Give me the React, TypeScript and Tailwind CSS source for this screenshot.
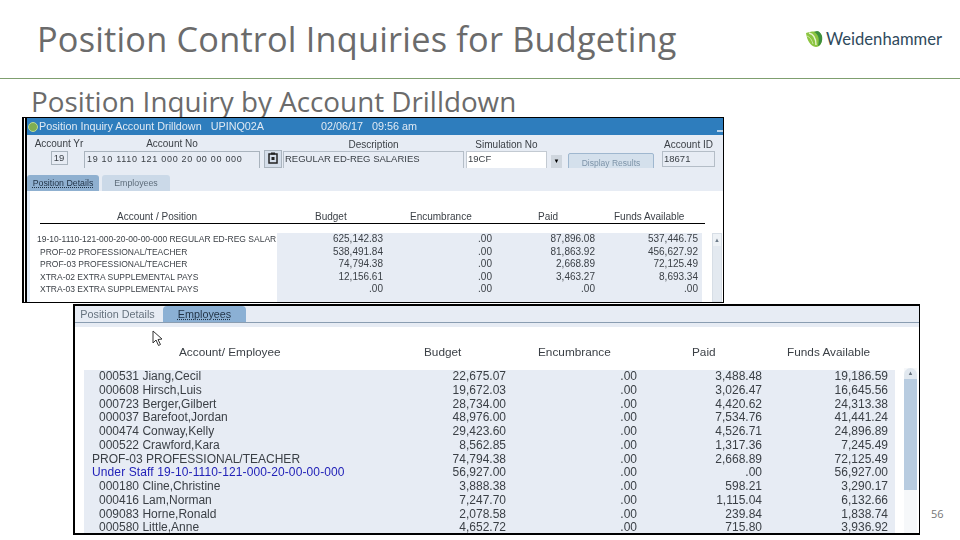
import React from 'react';

const positionRows = [
  ['19-10-1110-121-000-20-00-00-000 REGULAR ED-REG SALAR', '625,142.83', '.00', '87,896.08', '537,446.75'],
  ['PROF-02 PROFESSIONAL/TEACHER', '538,491.84', '.00', '81,863.92', '456,627.92'],
  ['PROF-03 PROFESSIONAL/TEACHER', '74,794.38', '.00', '2,668.89', '72,125.49'],
  ['XTRA-02 EXTRA SUPPLEMENTAL PAYS', '12,156.61', '.00', '3,463.27', '8,693.34'],
  ['XTRA-03 EXTRA SUPPLEMENTAL PAYS', '.00', '.00', '.00', '.00'],
];

const employeeRows = [
  ['000531 Jiang,Cecil', '22,675.07', '.00', '3,488.48', '19,186.59'],
  ['000608 Hirsch,Luis', '19,672.03', '.00', '3,026.47', '16,645.56'],
  ['000723 Berger,Gilbert', '28,734.00', '.00', '4,420.62', '24,313.38'],
  ['000037 Barefoot,Jordan', '48,976.00', '.00', '7,534.76', '41,441.24'],
  ['000474 Conway,Kelly', '29,423.60', '.00', '4,526.71', '24,896.89'],
  ['000522 Crawford,Kara', '8,562.85', '.00', '1,317.36', '7,245.49'],
  ['PROF-03 PROFESSIONAL/TEACHER', '74,794.38', '.00', '2,668.89', '72,125.49'],
  ['Under Staff 19-10-1110-121-000-20-00-00-000', '56,927.00', '.00', '.00', '56,927.00'],
  ['000180 Cline,Christine', '3,888.38', '.00', '598.21', '3,290.17'],
  ['000416 Lam,Norman', '7,247.70', '.00', '1,115.04', '6,132.66'],
  ['009083 Horne,Ronald', '2,078.58', '.00', '239.84', '1,838.74'],
  ['000580 Little,Anne', '4,652.72', '.00', '715.80', '3,936.92'],
];

const Logo = () => (
  <div className="flex items-center gap-[3px]">
    <svg width="18" height="17" viewBox="0 0 18 17">
      <path d="M1 2 C2 9 5 15 11 16 C15 16 17 12 17 7 C17 4 15 1 13 1 C9 0 4 1 1 2 Z" fill="#8cc540" />
      <path d="M9 1 C13 3 15 7 13 15 C16 14 18 10 17 5 C16 2 14 0 12 0 Z" fill="#3e8f3e" />
      <path d="M4 2 C8 3 11 7 11 14" stroke="#e8f3d0" strokeWidth="1.4" fill="none" />
      <path d="M2 5 C5 6 7 9 8 13" stroke="#c7e39a" strokeWidth="1" fill="none" />
    </svg>
    <span className="font-['Lato',sans-serif] text-[16.6px] leading-none text-[#2f4a5c]">Weidenhammer</span>
  </div>
);

const WindowOne = () => (
  <div className="absolute left-[22px] top-[117px] flex h-[186px] w-[702px] flex-col overflow-hidden border border-double border-black border-l-[5px] bg-white font-['Liberation_Sans',sans-serif] text-[#3a3f45] blur-[0.3px]">
    <div className="flex h-[17px] shrink-0 items-center justify-between bg-[#2e7dbd] pl-[1px] text-[10.8px] text-[#dfe9f3]">
      <div className="flex items-center gap-[1px]">
        <span className="h-[10px] w-[10px] rounded-full border border-[#b9d99a] bg-[#7fae52]" />
        <span className="w-[224px] whitespace-nowrap">Position Inquiry Account Drilldown&nbsp;&nbsp;&nbsp;UPINQ02A</span>
        <span className="ml-[57px] whitespace-nowrap">02/06/17&nbsp;&nbsp;&nbsp;09:56 am</span>
      </div>
      <span className="mt-[4px] h-[6px] w-[6px] border-b-2 border-[#b9d3ea]" />
    </div>
    <div className="flex h-[33px] shrink-0 items-start overflow-hidden bg-[#e7ecf4] text-[9.5px]">
      <div className="ml-[7px] flex w-[50px] flex-col items-center pt-[3px]">
        <span className="whitespace-nowrap text-[10px] leading-[11px]">Account Yr</span>
        <span className="mt-[2px] flex h-[14px] w-[17px] items-center justify-center border border-[#a9b3bd]">19</span>
      </div>
      <div className="flex w-[176px] flex-col items-center pt-[3px]">
        <span className="text-[10px] leading-[11px]">Account No</span>
        <span className="mt-[2px] h-[20px] w-[176px] border border-[#a9b3bd] pl-[2px] text-[9px] leading-[14px] tracking-[0.7px] whitespace-nowrap">19 10 1110 121 000 20 00 00 000</span>
      </div>
      <span className="ml-[4px] mt-[15px] flex h-[18px] w-[18px] items-start justify-center border border-[#a9b3bd] bg-[#d5deea] pt-[1px]">
        <svg width="10" height="12" viewBox="0 0 10 12"><rect x="1" y="2" width="8" height="9" fill="none" stroke="#222" strokeWidth="1.5" /><rect x="3" y="0.5" width="4" height="2" fill="#222" /><rect x="3.5" y="5" width="3" height="3" fill="#222" /></svg>
      </span>
      <div className="ml-[1px] flex w-[181px] flex-col items-center pt-[4px]">
        <span className="text-[10px] leading-[11px]">Description</span>
        <span className="mt-[1px] h-[20px] w-[181px] border border-[#b4bdc7] pl-[1px] leading-[14px]">REGULAR ED-REG SALARIES</span>
      </div>
      <div className="ml-[2px] flex w-[81px] flex-col items-center pt-[4px]">
        <span className="whitespace-nowrap text-[10px] leading-[11px]">Simulation No</span>
        <span className="mt-[1px] h-[20px] w-[81px] border border-[#c3cad2] bg-white pl-[1px] leading-[14px]">19CF</span>
      </div>
      <span className="ml-[4px] mt-[20px] flex h-[13px] w-[11px] items-center justify-center bg-[#cfd6de] text-[6px] text-black">▼</span>
      <span className="ml-[6px] mt-[18px] h-[20px] w-[86px] rounded-[2px] border border-[#9fb7cf] bg-[#d4e0ec] pt-[3px] text-center text-[8.5px] text-[#7d93a8]">Display Results</span>
      <div className="ml-[8px] flex w-[53px] flex-col items-center pt-[4px]">
        <span className="whitespace-nowrap text-[10px] leading-[11px]">Account ID</span>
        <span className="mt-[1px] h-[16px] w-[53px] border border-[#b4bdc7] pl-[1px] leading-[14px]">18671</span>
      </div>
    </div>
    <div className="flex h-[23px] shrink-0 items-end gap-[3px] bg-[#e7ecf4] text-[8.8px]">
      <span className="h-[16px] w-[72px] rounded-t-[3px] bg-[#8fb0d0] text-center leading-[17px] text-[#1f3144] underline decoration-dotted">Position Details</span>
      <span className="h-[16px] w-[68px] rounded-t-[3px] bg-[#cbd9e8] text-center leading-[17px] text-[#5d6c7a]">Employees</span>
    </div>
    <div className="flex min-h-0 flex-1 border-l-[3px] border-l-[#e3eefb] pl-[10px]">
      <div className="flex w-[665px] shrink-0 flex-col">
        <div className="mt-[20px] grid h-[13px] grid-cols-[275px_95px_128px_76px_91px] border-b border-black text-[10px] leading-[12px]">
          <span className="whitespace-nowrap pl-[77px]">Account / Position</span>
          <span>Budget</span>
          <span>Encumbrance</span>
          <span>Paid</span>
          <span className="whitespace-nowrap">Funds Available</span>
        </div>
        <div className="mt-[9px] -ml-[3px] flex flex-1">
          <div className="w-[240px] shrink-0 text-[8.5px]">
            {positionRows.map((row, i) => (
              <div key={row[0]} className={`h-[12.6px] whitespace-nowrap leading-[12.6px] ${i === 0 ? '' : 'pl-[3px]'}`}>{row[0]}</div>
            ))}
          </div>
          <div className="w-[425px] shrink-0 bg-[#e7ecf4] pr-[4px]">
            {positionRows.map((row) => (
              <div key={row[0]} className="grid h-[12.6px] grid-cols-[106px_109px_103px_103px] text-right text-[10px] leading-[12.6px]">
                <span>{row[1]}</span>
                <span>{row[2]}</span>
                <span>{row[3]}</span>
                <span>{row[4]}</span>
              </div>
            ))}
          </div>
        </div>
      </div>
      <div className="ml-[7px] mt-[42px] flex w-[10px] flex-col border border-[#d7dee6] bg-[#eef2f6]">
        <span className="flex h-[12px] items-center justify-center rounded-t-full text-[6px] text-[#6d7b89]">▲</span>
        <span className="flex-1 bg-[#e3e9f0]" />
      </div>
    </div>
  </div>
);

const WindowTwo = () => (
  <div className="absolute left-[73px] top-[304px] flex h-[231px] w-[847px] flex-col overflow-hidden border-2 border-r border-black bg-white font-['Liberation_Sans',sans-serif] text-[#3a3f45] blur-[0.3px]">
    <div className="flex h-[17px] shrink-0 items-end gap-[3px] border-b border-[#8a9db1] bg-[#e7ecf4] text-[10.8px]">
      <span className="h-[16px] w-[85px] text-center leading-[16px] text-[#66727e]">Position Details</span>
      <span className="h-[16px] w-[83px] rounded-t-[4px] bg-[#8bb0d4] text-center leading-[16px] text-[#1f3144] underline decoration-dotted">Employees</span>
    </div>
    <div className="h-[4px] shrink-0 bg-[#e7ecf4]" />
    <div className="flex min-h-0 flex-1 text-[12px]">
      <div className="flex w-[820px] shrink-0 flex-col">
        <div className="mt-[19px] grid h-[12px] grid-cols-[349px_114px_154px_95px_108px] text-[11.8px] leading-[12px]">
          <span className="whitespace-nowrap pl-[104px]">Account/ Employee</span>
          <span>Budget</span>
          <span>Encumbrance</span>
          <span>Paid</span>
          <span className="whitespace-nowrap">Funds Available</span>
        </div>
        <div className="ml-[9px] mt-[12px] flex-1 bg-[#e7ecf4] pr-[5px]">
          {employeeRows.map((row) => {
            const isStaff = row[0].startsWith('Under');
            const isHead = row[0].startsWith('PROF') || isStaff;
            return (
              <div key={row[0]} className="grid h-[13.75px] grid-cols-[300px_122px_131px_125px_126px] text-right leading-[13.75px]">
                <span className={`whitespace-nowrap text-left ${isHead ? 'pl-[8px]' : 'pl-[15px]'} ${isStaff ? 'tracking-[0.12px] text-[#2222b8]' : ''}`}>{row[0]}</span>
                <span>{row[1]}</span>
                <span>{row[2]}</span>
                <span>{row[3]}</span>
                <span>{row[4]}</span>
              </div>
            );
          })}
        </div>
      </div>
      <div className="ml-[9px] mt-[41px] flex w-[13px] flex-col bg-[#f6f8fa]">
        <span className="flex h-[11px] items-center justify-center rounded-t-full bg-[#e1e8ef] text-[6px] text-[#66727e]">▲</span>
        <span className="h-[111px] bg-[#b8cce0]" />
      </div>
    </div>
    {/* mouse pointer left in the capture */}
    <svg className="absolute left-[77px] top-[24px]" width="12" height="17" viewBox="0 0 12 17">
      <path d="M1 1 L1 13 L4 10 L6.5 15.5 L8.5 14.5 L6 9.5 L10 9 Z" fill="#fff" stroke="#333" strokeWidth="1" />
    </svg>
  </div>
);

const App: React.FC = () => {
  return (
    <div className="relative h-[540px] w-[960px] overflow-hidden bg-white font-['Open_Sans',sans-serif] text-[#6b6b6b]">
      <div className="flex h-[79px] items-center justify-between border-b border-[#7f9f6f] pl-[37px] pr-[18px]">
        <h1 className="text-[34.3px] leading-none tracking-[0.2px]">Position Control Inquiries for Budgeting</h1>
        <Logo />
      </div>
      <h2 className="mt-[6px] pl-[31px] text-[27.8px] leading-[32px]">Position Inquiry by Account Drilldown</h2>
      <WindowOne />
      <WindowTwo />
      <span className="absolute left-[931px] top-[506px] text-[11px] text-[#777]">56</span>
    </div>
  );
};

export default App;
